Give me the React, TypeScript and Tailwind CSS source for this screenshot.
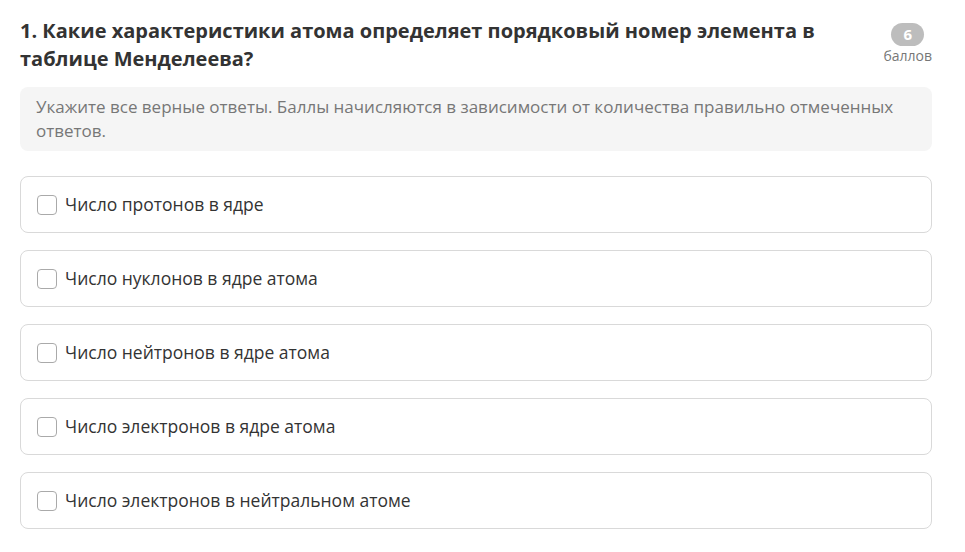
import React from 'react';

const options = [
  'Число протонов в ядре',
  'Число нуклонов в ядре атома',
  'Число нейтронов в ядре атома',
  'Число электронов в ядре атома',
  'Число электронов в нейтральном атоме',
];

const App = () => {
  return (
    <div className="min-h-screen bg-white pl-5 pr-[33px] pt-[17px] font-['Open_Sans','Noto_Sans',sans-serif] text-[#333]">
      {/* Question header */}
      <div className="flex justify-between gap-6">
        <h1 className="text-[20px] font-bold leading-[28px] text-[#333]">
          1. Какие характеристики атома определяет порядковый номер элемента в таблице Менделеева?
        </h1>
        <div className="flex shrink-0 flex-col items-center pt-[6px]">
          <span className="flex h-[23px] w-[33px] items-center justify-center rounded-full bg-[#bdbdbd] text-[15px] font-bold text-white">
            6
          </span>
          <span className="mt-[2px] text-[14px] leading-4 text-[#777]">баллов</span>
        </div>
      </div>

      {/* Hint */}
      <div className="mt-[14px] rounded-lg bg-[#f5f5f5] py-[8px] pl-4 pr-3 text-[17px] leading-[24px] text-[#777]">
        Укажите все верные ответы. Баллы начисляются в зависимости от количества правильно отмеченных ответов.
      </div>

      {/* Options */}
      <div className="mt-[25px] flex flex-col gap-[17px]">
        {options.map((opt, index) => (
          <label
            key={index}
            className="flex h-[57px] items-center gap-[8px] rounded-lg border border-[#d9d9d9] bg-white px-4"
          >
            <span className="h-5 w-5 shrink-0 rounded-[4px] border border-[#aaa] bg-white" />
            <span className="text-[17.5px] text-[#333]">{opt}</span>
          </label>
        ))}
      </div>
    </div>
  );
};

export default App;
